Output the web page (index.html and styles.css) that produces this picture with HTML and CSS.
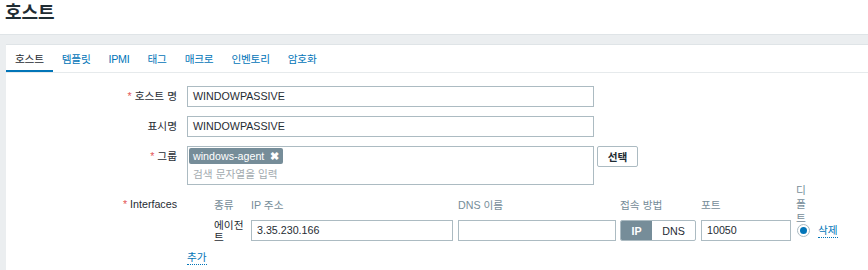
FILE: index.html
```html
<!DOCTYPE html>
<html lang="ko">
<head>
<meta charset="utf-8">
<link rel="stylesheet" href="styles.css">
</head>
<body>
<header class="header"><h1 class="title">호스트</h1></header>
<main class="wrap">
  <section class="panel">
    <nav class="tabs">
      <span class="tab active">호스트</span>
      <span class="tab">템플릿</span>
      <span class="tab">IPMI</span>
      <span class="tab">태그</span>
      <span class="tab">매크로</span>
      <span class="tab">인벤토리</span>
      <span class="tab">암호화</span>
    </nav>
    <div class="form">
      <label class="label"><span class="req">*</span> 호스트 명</label>
      <div class="field"><div class="input">WINDOWPASSIVE</div></div>

      <label class="label">표시명</label>
      <div class="field"><div class="input">WINDOWPASSIVE</div></div>

      <label class="label"><span class="req">*</span> 그룹</label>
      <div class="field ms-row">
        <div class="ms">
          <span class="tag">windows-agent <span class="tag-x">✖</span></span>
          <span class="placeholder">검색 문자열을 입력</span>
        </div>
        <button class="btn">선택</button>
      </div>

      <label class="label label-if"><span class="req">*</span> Interfaces</label>
      <div class="iface">
        <div class="hcell"></div>
        <div class="hcell">종류</div>
        <div class="hcell">IP 주소</div>
        <div class="hcell">DNS 이름</div>
        <div class="hcell">접속 방법</div>
        <div class="hcell">포트</div>
        <div class="hcell"><span class="vert">디폴트</span></div>
        <div class="hcell"></div>

        <div class="dcell"></div>
        <div class="dcell type">에이전트</div>
        <div class="dcell"><div class="input ip">3.35.230.166</div></div>
        <div class="dcell"><div class="input dns"></div></div>
        <div class="dcell">
          <div class="toggle"><span class="tg on">IP</span><span class="tg">DNS</span></div>
        </div>
        <div class="dcell"><div class="input port">10050</div></div>
        <div class="dcell"><span class="radio"><span class="dot"></span></span></div>
        <div class="dcell"><a class="link">삭제</a></div>

        <div class="add"><a class="link">추가</a></div>
      </div>
    </div>
  </section>
</main>
</body>
</html>
```
FILE: styles.css
```css
html, body {
  margin: 0;
  padding: 0;
}
body {
  width: 868px;
  height: 270px;
  overflow: hidden;
  display: flex;
  flex-direction: column;
  font-family: "Liberation Sans", Arial, "Noto Sans CJK KR", sans-serif;
  font-size: 10.7px;
  color: #1f2c33;
  background: #fff;
}
.header {
  height: 34px;
  box-sizing: border-box;
  padding: 0 0 0 5px;
  display: flex;
  align-items: flex-start;
}
.title {
  margin: 0;
  font-size: 18px;
  line-height: 26px;
  font-weight: bold;
  color: #1f2c33;
}
.wrap {
  flex: 1;
  background: #ebeef0;
  border-top: 1px solid #dfe4e7;
  padding: 9px 0 0 6px;
  display: flex;
}
.panel {
  flex: 1;
  background: #fff;
  border-top: 1px solid #dfe4e7;
}
.tabs {
  display: flex;
  height: 28px;
  box-sizing: border-box;
  border-bottom: 1px solid #e6eaec;
}
.tab {
  display: flex;
  align-items: center;
  padding: 0 9px;
  color: #0275b8;
  letter-spacing: -0.25px;
}
.tab.active {
  color: #1f2c33;
  box-shadow: inset 0 -2px 0 #0275b8;
}
.form {
  display: grid;
  grid-template-columns: 171px 407px;
  column-gap: 10px;
  row-gap: 9px;
  padding-top: 13px;
  align-items: start;
}
.label {
  text-align: right;
  line-height: 21px;
  white-space: nowrap;
}
.label-if {
  line-height: 20px;
}
.req {
  color: #e45959;
}
.input {
  box-sizing: border-box;
  height: 21px;
  border: 1px solid #acbbc2;
  padding: 0 5px;
  line-height: 19px;
  background: #fff;
  white-space: nowrap;
}
.ms-row {
  display: flex;
  align-items: flex-start;
  width: 460px;
}
.ms {
  box-sizing: border-box;
  width: 407px;
  height: 39px;
  border: 1px solid #acbbc2;
  padding: 1px 1px 0 1px;
  display: flex;
  flex-direction: column;
  align-items: flex-start;
}
.tag {
  background: #768d99;
  color: #fff;
  height: 16px;
  line-height: 16px;
  padding: 0 4px 0 4px;
  border-radius: 2px;
}
.tag-x {
  font-size: 11px;
  font-weight: bold;
  margin-left: 3px;
}
.placeholder {
  color: #a3abb0;
  padding-left: 4px;
  line-height: 20px;
}
.btn {
  margin-left: 3px;
  box-sizing: border-box;
  width: 41px;
  height: 21px;
  border: 1px solid #acbbc2;
  border-radius: 2px;
  background: #fff;
  font: inherit;
  font-weight: bold;
  color: #1f2c33;
  padding: 0;
}
.iface {
  display: grid;
  grid-template-columns: 27px 37px 207px 162px 81px 95px 22px 50px;
  grid-template-rows: 20px 21px 21px;
  row-gap: 6px;
  width: 681px;
}
.hcell {
  height: 20px;
  display: flex;
  align-items: center;
  color: #768d99;
  white-space: nowrap;
}
.vert {
  width: 13px;
  white-space: normal;
  line-height: 14px;
}
.dcell {
  height: 21px;
  display: flex;
  align-items: center;
}
.type {
  width: 33px;
  line-height: 12px;
}
.ip { width: 202px; }
.dns { width: 158px; }
.port { width: 90px; }
.toggle {
  box-sizing: border-box;
  width: 76px;
  height: 21px;
  display: flex;
  border: 1px solid #acbbc2;
  border-radius: 2px;
  overflow: hidden;
}
.tg {
  flex: 1;
  display: flex;
  align-items: center;
  justify-content: center;
  color: #1f2c33;
}
.tg.on {
  flex: 0 0 31px;
  background: #768d99;
  color: #fff;
  font-weight: bold;
}
.radio {
  box-sizing: border-box;
  width: 13px;
  height: 13px;
  margin-left: 1px;
  border: 1px solid #acbbc2;
  border-radius: 50%;
  background: #fff;
  display: flex;
  align-items: center;
  justify-content: center;
}
.dot {
  width: 7px;
  height: 7px;
  border-radius: 50%;
  background: #0275b8;
}
.link {
  color: #0275b8;
  border-bottom: 1px dotted #0275b8;
  line-height: 13px;
}
.add {
  grid-column: 1 / -1;
  display: flex;
  align-items: center;
  height: 21px;
}
```
